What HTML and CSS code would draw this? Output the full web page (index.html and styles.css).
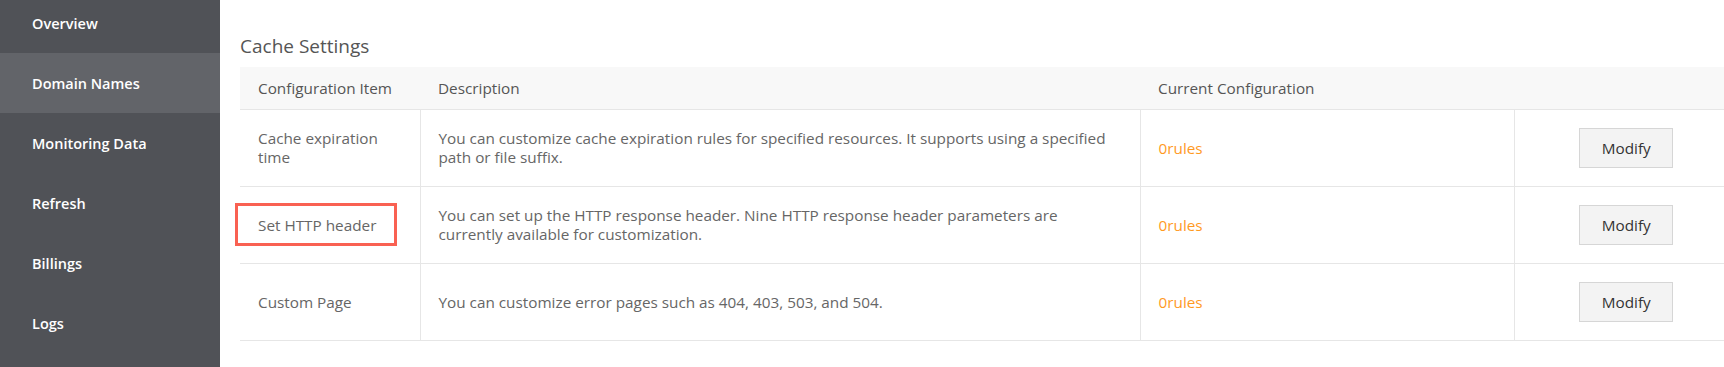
FILE: index.html
```html
<!DOCTYPE html>
<html lang="en">
<head>
    <meta charset="UTF-8">
    <meta name="viewport" content="width=device-width, initial-scale=1.0">
    <title>Cache Settings</title>
    <link rel="stylesheet" href="styles.css">
</head>
<body>
    <div class="layout">
        <!-- Sidebar -->
        <nav class="sidebar">
            <ul class="nav-list">
                <li class="nav-item">Overview</li>
                <li class="nav-item active">Domain Names</li>
                <li class="nav-item">Monitoring Data</li>
                <li class="nav-item">Refresh</li>
                <li class="nav-item">Billings</li>
                <li class="nav-item">Logs</li>
            </ul>
        </nav>

        <main class="content">
            <h2 class="section-title">Cache Settings</h2>

            <table class="config-table">
                <colgroup>
                    <col class="col-item">
                    <col class="col-desc">
                    <col class="col-current">
                    <col class="col-action">
                </colgroup>
                <thead>
                    <tr>
                        <th>Configuration Item</th>
                        <th>Description</th>
                        <th>Current Configuration</th>
                        <th></th>
                    </tr>
                </thead>
                <tbody>
                    <tr>
                        <td>Cache expiration time</td>
                        <td class="desc">You can customize cache expiration rules for specified resources. It supports using a specified path or file suffix.</td>
                        <td class="rules">0rules</td>
                        <td class="action"><button class="btn">Modify</button></td>
                    </tr>
                    <tr>
                        <td><span class="highlight">Set HTTP header</span></td>
                        <td class="desc">You can set up the HTTP response header. Nine HTTP response header parameters are currently available for customization.</td>
                        <td class="rules">0rules</td>
                        <td class="action"><button class="btn">Modify</button></td>
                    </tr>
                    <tr>
                        <td>Custom Page</td>
                        <td class="desc">You can customize error pages such as 404, 403, 503, and 504.</td>
                        <td class="rules">0rules</td>
                        <td class="action"><button class="btn">Modify</button></td>
                    </tr>
                </tbody>
            </table>
        </main>
    </div>
</body>
</html>
```

FILE: styles.css
```css
/* Page */
body {
    margin: 0;
    padding: 0;
    font-family: 'Open Sans', 'Liberation Sans', sans-serif;
    font-size: 15.3px;
    color: #666;
    background: #fff;
    overflow: hidden;
}

.layout {
    display: flex;
    min-height: 367px;
}

/* Sidebar */
.sidebar {
    width: 220px;
    flex-shrink: 0;
    background-color: #505257;
}

.nav-list {
    list-style: none;
    margin: -7px 0 0;
    padding: 0;
}

.nav-item {
    height: 60px;
    display: flex;
    align-items: center;
    padding-left: 32px;
    color: #fff;
    font-size: 14.5px;
    font-weight: 600;
}

.nav-item.active {
    background-color: #626469;
}

/* Content */
.content {
    flex: 1;
    padding-left: 20px;
}

.section-title {
    margin: 0;
    padding-top: 33px;
    height: 34px;
    font-size: 19px;
    font-weight: 400;
    color: #555;
    line-height: 26px;
}

.config-table {
    width: 1498px;
    border-collapse: collapse;
    table-layout: fixed;
}

.col-item { width: 180px; }
.col-desc { width: 720px; }
.col-current { width: 374px; }
.col-action { width: 224px; }

.config-table th {
    height: 42px;
    padding: 0 18px;
    background-color: #f8f8f8;
    border-bottom: 1px solid #e6e6e6;
    text-align: left;
    font-weight: 400;
    color: #555;
}

.config-table td {
    height: 76px;
    padding: 0 18px;
    border-bottom: 1px solid #e6e6e6;
    border-right: 1px solid #e6e6e6;
    line-height: 19px;
    vertical-align: middle;
}

.config-table td.desc {
    padding-right: 24px;
}

.config-table td:last-child {
    border-right: none;
}

.rules {
    color: #ff9a1f;
}

.action {
    text-align: center;
}

.btn {
    width: 94px;
    height: 40px;
    background-color: #f3f3f3;
    border: 1px solid #d6d6d6;
    font-family: inherit;
    font-size: 15.3px;
    color: #333;
    cursor: pointer;
}

/* Annotation box */
.highlight {
    position: relative;
}

.highlight::after {
    content: '';
    position: absolute;
    left: -23px;
    top: 50%;
    margin-top: -21.5px;
    width: 162px;
    height: 43px;
    box-sizing: border-box;
    border: 3px solid #f96152;
}
```
